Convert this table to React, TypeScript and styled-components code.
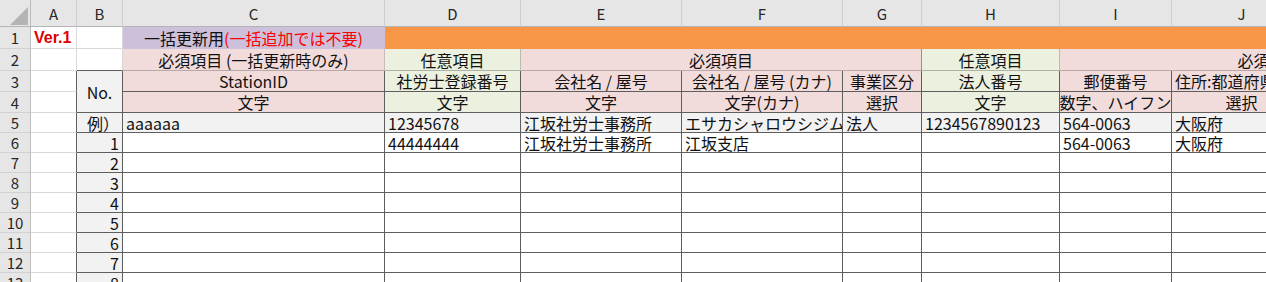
import React from "react";
import styled, { createGlobalStyle } from "styled-components";

const GlobalStyle = createGlobalStyle`
  html, body {
    margin: 0;
    padding: 0;
    background: #ffffff;
  }
  body {
    font-family: "Noto Sans CJK JP", "Noto Sans", sans-serif;
    color: #111;
  }
`;

const PURPLE = "#ccc0da";
const ORANGE = "#f79646";
const PINK = "#f2dcdb";
const GREEN = "#ebf1de";
const GREY = "#f2f2f2";
const GRID = "#d9d9d9";
const DARK = "#5e5e5e";

const COLS = ["A", "B", "C", "D", "E", "F", "G", "H", "I", "J", "K"];
const WIDTHS = [31, 46, 46, 262, 136, 161, 161, 79, 138, 112, 140, 168];
const HEIGHTS = [27, 22, 22, 21, 21, 20, 20, 20, 20, 20, 20, 20, 20, 20];

const Sheet = styled.div`
  display: grid;
  grid-template-columns: ${WIDTHS.map((w) => `${w}px`).join(" ")};
  grid-template-rows: ${HEIGHTS.map((h) => `${h}px`).join(" ")};
  width: 1266px;
  height: 282px;
  overflow: hidden;
`;

const Corner = styled.div`
  box-sizing: border-box;
  background: #e6e6e6;
  border-right: 1px solid #bdbdbd;
  border-bottom: 1px solid #b5b5b5;
  display: flex;
  justify-content: flex-end;
  align-items: flex-end;
  padding: 0 2px 1px 0;
`;

const Triangle = styled.div`
  width: 18px;
  height: 18px;
  background: #b4b4b4;
  clip-path: polygon(100% 0, 100% 100%, 0 100%);
`;

const ColHead = styled.div`
  box-sizing: border-box;
  background: #e6e6e6;
  border-right: 1px solid #cfcfcf;
  border-bottom: 1px solid #b5b5b5;
  display: flex;
  align-items: center;
  justify-content: center;
  padding-top: 2px;
  font-size: 15px;
  line-height: 18px;
  color: #262626;
`;

const RowHead = styled.div`
  box-sizing: border-box;
  background: #e6e6e6;
  border-right: 1px solid #bdbdbd;
  border-bottom: 1px solid #d2d2d2;
  display: flex;
  align-items: center;
  justify-content: center;
  font-size: 15px;
  line-height: 17px;
  color: #262626;
  overflow: hidden;
`;

type Align = "l" | "c" | "r";

const Cell = styled.div<{
  $bg: string;
  $r: string;
  $b: string;
  $al: Align;
  $span: number;
  $rspan: number;
}>`
  box-sizing: border-box;
  grid-column: span ${(p) => p.$span};
  grid-row: span ${(p) => p.$rspan};
  background: ${(p) => p.$bg};
  border-right: 1px solid ${(p) => p.$r};
  border-bottom: 1px solid ${(p) => p.$b};
  display: flex;
  align-items: center;
  justify-content: ${(p) =>
    p.$al === "l" ? "flex-start" : p.$al === "r" ? "flex-end" : "center"};
  padding: 0 3px;
  font-size: 16px;
  line-height: 18px;
  white-space: nowrap;
  overflow: hidden;
`;

const Version = styled.span`
  font-family: "Liberation Sans", "Noto Sans CJK JP", sans-serif;
  font-weight: 700;
  font-size: 16px;
  color: #e00000;
`;

const Red = styled.span`
  color: #ff0000;
`;

type Spec = {
  t?: React.ReactNode;
  bg?: string;
  al?: Align;
  span?: number;
  rspan?: number;
  r?: string;
  b?: string;
};

// plain cell, light gridlines
const g = (s: Spec = {}): Spec => ({ r: GRID, b: GRID, ...s });
// bordered table cell
const t = (s: Spec = {}): Spec => ({ r: DARK, b: DARK, ...s });
// filled block, no lines
const f = (bg: string, s: Spec = {}): Spec => ({ bg, r: bg, b: bg, ...s });

const numberRows: Spec[][] = Array.from({ length: 8 }, (_, i) => [
  g({ r: DARK }),
  t({ t: i + 1, bg: GREY, al: "r" }),
  t(),
  t({ t: i === 0 ? "44444444" : undefined, al: "l" }),
  t({ t: i === 0 ? "江坂社労士事務所" : undefined, al: "l" }),
  t({ t: i === 0 ? "江坂支店" : undefined, al: "l" }),
  t(),
  t(),
  t({ t: i === 0 ? "564-0063" : undefined, al: "l" }),
  t({ t: i === 0 ? "大阪府" : undefined, al: "l" }),
  t(),
]);

const rows: Spec[][] = [
  [
    g({ t: <Version>Ver.1</Version>, al: "l" }),
    g(),
    f(PURPLE, {
      t: (
        <>
          一括更新用<Red>(一括追加では不要)</Red>
        </>
      ),
    }),
    f(ORANGE, { span: 8 }),
  ],
  [
    g(),
    g({ b: DARK }),
    t({ t: "必須項目 (一括更新時のみ)", bg: PINK, r: "#c9b9b8", b: "#b8a9a8" }),
    t({ t: "任意項目", bg: GREEN, r: "#b9bdb0", b: "#aeb2a5" }),
    t({ t: "必須項目", bg: PINK, span: 3, r: "#9a9090", b: "#b8a9a8" }),
    t({ t: "任意項目", bg: GREEN, r: "#b9bdb0", b: "#aeb2a5" }),
    t({ t: "必須項目", bg: PINK, span: 3, b: "#b8a9a8" }),
  ],
  [
    g({ r: DARK }),
    t({ t: "No.", bg: GREY, rspan: 2 }),
    t({ t: "StationID", bg: PINK }),
    t({ t: "社労士登録番号", bg: GREEN }),
    t({ t: "会社名 / 屋号", bg: PINK }),
    t({ t: "会社名 / 屋号 (カナ)", bg: PINK }),
    t({ t: "事業区分", bg: PINK }),
    t({ t: "法人番号", bg: GREEN }),
    t({ t: "郵便番号", bg: PINK }),
    t({ t: "住所:都道府県", bg: PINK, al: "l" }),
    t({ bg: PINK }),
  ],
  [
    g({ r: DARK }),
    t({ t: "文字", bg: PINK }),
    t({ t: "文字", bg: GREEN }),
    t({ t: "文字", bg: PINK }),
    t({ t: "文字(カナ)", bg: PINK }),
    t({ t: "選択", bg: PINK }),
    t({ t: "文字", bg: GREEN }),
    t({ t: "数字、ハイフン", bg: PINK }),
    t({ t: "選択", bg: PINK }),
    t({ bg: PINK }),
  ],
  [
    g({ r: DARK }),
    t({ t: "例）", bg: GREY, al: "r" }),
    t({ t: "aaaaaa", bg: GREY, al: "l" }),
    t({ t: "12345678", bg: GREY, al: "l" }),
    t({ t: "江坂社労士事務所", bg: GREY, al: "l" }),
    t({ t: "エサカシャロウシジムショ", bg: GREY, al: "l" }),
    t({ t: "法人", bg: GREY, al: "l" }),
    t({ t: "1234567890123", bg: GREY, al: "l" }),
    t({ t: "564-0063", bg: GREY, al: "l" }),
    t({ t: "大阪府", bg: GREY, al: "l" }),
    t({ bg: GREY }),
  ],
  ...numberRows,
];

export default function App() {
  return (
    <>
      <GlobalStyle />
      <Sheet>
        <Corner>
          <Triangle />
        </Corner>
        {COLS.map((c) => (
          <ColHead key={c}>{c}</ColHead>
        ))}
        {rows.map((cells, ri) => (
          <React.Fragment key={ri}>
            <RowHead>{ri + 1}</RowHead>
            {cells.map((s, ci) => (
              <Cell
                key={ci}
                $bg={s.bg ?? "#ffffff"}
                $r={s.r ?? GRID}
                $b={s.b ?? GRID}
                $al={s.al ?? "c"}
                $span={s.span ?? 1}
                $rspan={s.rspan ?? 1}
              >
                {s.t}
              </Cell>
            ))}
          </React.Fragment>
        ))}
      </Sheet>
    </>
  );
}
